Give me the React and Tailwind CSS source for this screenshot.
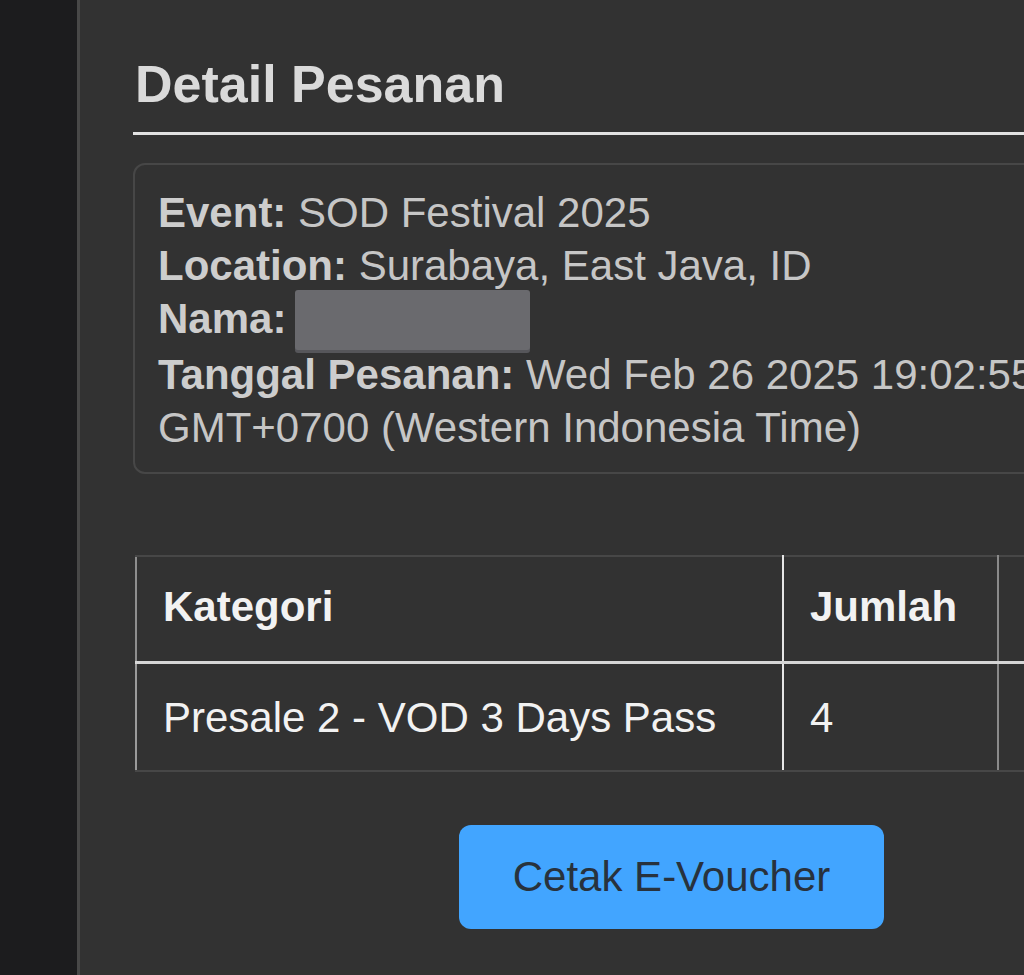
export default function App() {
  const info = [
    { label: 'Event:', value: 'SOD Festival 2025' },
    { label: 'Location:', value: 'Surabaya, East Java, ID' },
  ];

  return (
    <div className="flex min-h-screen h-[975px] overflow-hidden bg-[#323232] font-['Liberation_Sans',Arial,sans-serif]">
      {/* side strip */}
      <aside className="w-[80px] shrink-0 bg-[#1c1c1e] border-r-[3px] border-[#484848]"></aside>

      <main className="flex-1 bg-[#323232] pl-[53px] pt-[54px]">
        <div className="w-[1077px]">
          <h2 className="text-[52px] leading-[60px] font-bold text-[#dadada] pl-[2px] pb-[18px] border-b-[3px] border-[#e2e2e2]">
            Detail Pesanan
          </h2>

          {/* order info */}
          <div className="mt-[28px] border-2 border-[#474747] rounded-[12px] px-[23px] pt-[21px] pb-[18px] text-[42px] leading-[53px] text-[#c6c6c6]">
            {info.map((row) => (
              <p key={row.label}>
                <span className="font-bold text-[#cdcdcd]">{row.label}</span> {row.value}
              </p>
            ))}
            <p>
              <span className="font-bold text-[#cdcdcd]">Nama:</span>{' '}
              <span className="inline-block align-middle w-[235px] h-[60px] -mt-[6px] -mb-[2px] -ml-[3px] rounded-[3px] bg-[#6a6a6e] shadow-[0_3px_0_#56565a]"></span>
            </p>
            <p>
              <span className="font-bold text-[#cdcdcd]">Tanggal Pesanan:</span> Wed Feb 26 2025 19:02:55 GMT+0700 (Western Indonesia Time)
            </p>
          </div>

          {/* ticket table */}
          <table className="table-fixed w-[1160px] mt-[81px] ml-[2px] border-collapse text-[42px] leading-[52px] text-[#f2f2f2]">
            <colgroup>
              <col className="w-[647px]" />
              <col className="w-[215px]" />
              <col className="w-[298px]" />
            </colgroup>
            <thead>
              <tr>
                <th className="text-left font-bold pl-[26px] pt-[24px] pb-[28px] border-t-2 border-t-[#474747] border-l-2 border-l-[#8e8e8e] border-b-[3px] border-b-[#d6d6d6] border-r-2 border-r-[#e6e6e6]">
                  Kategori
                </th>
                <th className="text-left font-bold pl-[26px] pt-[24px] pb-[28px] border-t-2 border-t-[#474747] border-b-[3px] border-b-[#d6d6d6] border-r-2 border-r-[#8a8a8a]">
                  Jumlah
                </th>
                <th className="border-t-2 border-t-[#474747] border-b-[3px] border-b-[#d6d6d6]"></th>
              </tr>
            </thead>
            <tbody>
              <tr>
                <td className="pl-[26px] pt-[28px] pb-[26px] border-l-2 border-l-[#9a9a9a] border-r-2 border-r-[#e6e6e6] border-b-2 border-b-[#474747]">
                  Presale 2 - VOD 3 Days Pass
                </td>
                <td className="pl-[26px] pt-[28px] pb-[26px] border-r-2 border-r-[#8a8a8a] border-b-2 border-b-[#474747]">
                  4
                </td>
                <td className="border-b-2 border-b-[#474747]"></td>
              </tr>
            </tbody>
          </table>

          <div className="mt-[53px] flex justify-center">
            <button className="w-[425px] h-[104px] rounded-[12px] bg-[#42a5ff] text-[42px] text-[#28323d]">
              Cetak E-Voucher
            </button>
          </div>
        </div>
      </main>
    </div>
  );
}
